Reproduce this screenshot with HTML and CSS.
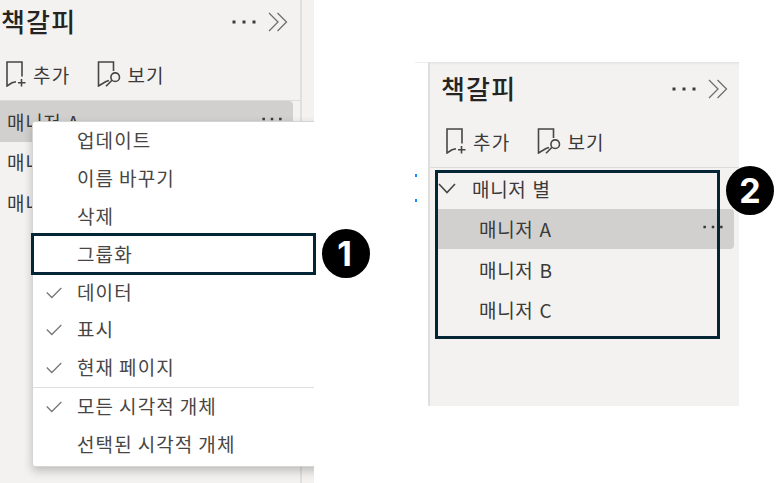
FILE: index.html
```
<!DOCTYPE html>
<html lang="ko">
<head>
    <meta charset="UTF-8">
    <meta name="viewport" content="width=device-width, initial-scale=1.0">
    <title>책갈피</title>
    <link rel="stylesheet" href="styles.css">
</head>
<body>
    <svg class="defs" width="0" height="0">
        <symbol id="add" viewBox="0 0 20 26">
            <path d="M16 15.500V1H1v24l5-3.200 4-1M15.500 18v7.500M12 21.800h7.500"/>
        </symbol>
        <symbol id="view" viewBox="0 0 24 26">
            <path d="M16.500 10V1H1.500v24L9 20.500l3-1M15 19.300L9 25.300"/>
            <circle cx="18.2" cy="16.2" r="4.3"/>
        </symbol>
        <symbol id="collapse" viewBox="0 0 20 20">
            <path d="M1 1l9 9-9 9M9.500 1l9 9-9 9"/>
        </symbol>
        <symbol id="dots" viewBox="0 0 24 4">
            <path d="M.5.5h3v3h-3zM10.500.5h3v3h-3zM20.500.5h3v3h-3z"/>
        </symbol>
        <symbol id="check" viewBox="0 0 16 12">
            <path d="M.8 5.500l5 5L15.300 1"/>
        </symbol>
    </svg>

    <div class="shot shot-menu">
        <div class="pane">
            <div class="pane-header">
                <h2>책갈피</h2>
                <svg class="dots" width="24" height="4"><use href="#dots"/></svg>
                <svg class="collapse" width="20" height="20"><use href="#collapse"/></svg>
            </div>
            <div class="toolbar">
                <span class="tool"><svg width="20" height="26"><use href="#add"/></svg>추가</span>
                <span class="tool"><svg width="24" height="26"><use href="#view"/></svg>보기</span>
            </div>
            <div class="list">
                <div class="row selected"><span>매니저 A</span><svg class="dots" width="20" height="4"><use href="#dots"/></svg></div>
                <div class="row"><span>매니저 B</span></div>
                <div class="row"><span>매니저 C</span></div>
            </div>
        </div>
        <div class="menu">
            <div class="item">업데이트</div>
            <div class="item">이름 바꾸기</div>
            <div class="item">삭제</div>
            <div class="item">그룹화</div>
            <div class="item"><svg class="check" width="16" height="12"><use href="#check"/></svg>데이터</div>
            <div class="item"><svg class="check" width="16" height="12"><use href="#check"/></svg>표시</div>
            <div class="item"><svg class="check" width="16" height="12"><use href="#check"/></svg>현재 페이지</div>
            <div class="item divided"><svg class="check" width="16" height="12"><use href="#check"/></svg>모든 시각적 개체</div>
            <div class="item">선택된 시각적 개체</div>
        </div>
    </div>
    <div class="frame frame-one"></div>
    <div class="badge badge-one">1</div>

    <div class="shot shot-group">
        <div class="canvas-edge"><i></i><i></i></div>
        <div class="pane">
            <div class="pane-header">
                <h2>책갈피</h2>
                <svg class="dots" width="24" height="4"><use href="#dots"/></svg>
                <svg class="collapse" width="20" height="20"><use href="#collapse"/></svg>
            </div>
            <div class="toolbar">
                <span class="tool"><svg width="20" height="26"><use href="#add"/></svg>추가</span>
                <span class="tool"><svg width="24" height="26"><use href="#view"/></svg>보기</span>
            </div>
            <div class="list">
                <div class="row group"><svg class="chevron" width="18" height="11" viewBox="0 0 18 11"><path d="M1 1l8 8.500L17 1"/></svg><span>매니저 별</span></div>
                <div class="row child selected"><span>매니저 A</span><svg class="dots" width="20" height="4"><use href="#dots"/></svg></div>
                <div class="row child"><span>매니저 B</span></div>
                <div class="row child"><span>매니저 C</span></div>
            </div>
        </div>
    </div>
    <div class="frame frame-two"></div>
    <div class="badge badge-two">2</div>
</body>
</html>
```
FILE: styles.css
```
* {
    box-sizing: border-box;
}
body {
    margin: 0;
    width: 783px;
    height: 483px;
    display: flex;
    gap: 101px;
    position: relative;
    overflow: hidden;
    background: #fff;
    color: #3b3a39;
    font-family: "Noto Sans CJK KR", "Noto Sans", sans-serif;
    font-size: 19px;
}
svg {
    display: block;
    flex: none;
    fill: none;
    stroke: #484644;
    stroke-width: 1.6;
}
.defs {
    position: absolute;
}
.shot {
    position: relative;
    overflow: hidden;
    display: flex;
}
.shot-menu {
    width: 314px;
    height: 483px;
    background: #f3f2f1;
}
.shot-group {
    width: 324px;
    height: 344px;
    margin-top: 62px;
}
.pane {
    background: #f3f2f1;
}
.shot-menu .pane {
    width: 302px;
    border-right: 2px solid #e1dfdd;
}
.shot-group .pane {
    width: 311px;
    border-left: 2px solid #e1dfdd;
    box-shadow: inset 0 3px 3px -2px #dddcda;
}
.pane-header {
    display: flex;
    align-items: center;
    height: 44px;
    padding: 0 12px 0 1px;
}
.shot-group .pane-header {
    height: 49px;
    padding: 5px 11px 0 11px;
}
.pane-header h2 {
    margin: -2px 0 0;
    flex: 1;
    font-size: 26px;
    line-height: 36px;
    font-weight: 500;
    letter-spacing: 1.2px;
    color: #252423;
}
.dots {
    fill: #3b3a39;
    stroke: none;
}
.collapse {
    margin-left: 12px;
    stroke: #706e6c;
    stroke-width: 1.3;
}
.toolbar {
    display: flex;
    gap: 27px;
    height: 57px;
    padding: 0 0 0 6px;
    align-items: center;
    border-bottom: 1px solid #dedcda;
}
.shot-group .toolbar {
    padding-left: 16px;
}
.tool {
    display: flex;
    align-items: center;
    gap: 7px;
    height: 30px;
    margin-top: 4px;
    letter-spacing: 1.2px;
}
.tool + .tool {
    gap: 6px;
}
.row {
    display: flex;
    align-items: center;
    justify-content: space-between;
    height: 40.500px;
    margin-right: 7px;
    padding: 0 11px 0 7px;
    letter-spacing: .7px;
}
.shot-group .row {
    margin-left: 6px;
    margin-right: 5px;
}
.selected {
    background: #d2d0ce;
    border-radius: 0 4px 4px 0;
}
.shot-group .group {
    justify-content: flex-start;
    gap: 16px;
    padding-left: 2px;
}
.child {
    padding-left: 43px;
}
.selected .dots {
    margin-top: -4px;
}
.menu {
    position: absolute;
    left: 32px;
    top: 121px;
    width: 300px;
    height: 346px;
    background: #fff;
    border: 1px solid #d6d4d2;
    border-radius: 3px;
    box-shadow: 0 4px 10px rgba(0, 0, 0, 0.22);
}
.item {
    position: relative;
    height: 37.900px;
    line-height: 35px;
    padding-left: 44px;
    letter-spacing: 1.1px;
    word-spacing: -1.5px;
    color: #484644;
}
.divided {
    height: 39px;
    border-top: 1px solid #e1dfdd;
}
.check {
    position: absolute;
    left: 13px;
    top: 13px;
    stroke: #7a7876;
    stroke-width: 1.3;
}
.canvas-edge {
    width: 13px;
    padding-top: 112px;
    box-shadow: inset 0 1px #eeeeed;
}
.canvas-edge i {
    display: block;
    width: 2px;
    height: 3px;
    margin-bottom: 22px;
    background: #118dff;
}
/* numbered callouts */
.frame {
    position: absolute;
    border: 3px solid #042535;
}
.frame-one {
    left: 31px;
    top: 233px;
    width: 285px;
    height: 42px;
}
.frame-two {
    left: 435px;
    top: 170px;
    width: 285px;
    height: 169px;
}
.badge {
    position: absolute;
    width: 48px;
    height: 49px;
    border-radius: 50%;
    background: #000;
    color: #fff;
    font: bold 34px/50px Inter, sans-serif;
    text-align: center;
}
.badge-one {
    left: 322px;
    top: 229px;
    padding-right: 3px;
}
.badge-two {
    left: 726px;
    top: 166px;
}
```
